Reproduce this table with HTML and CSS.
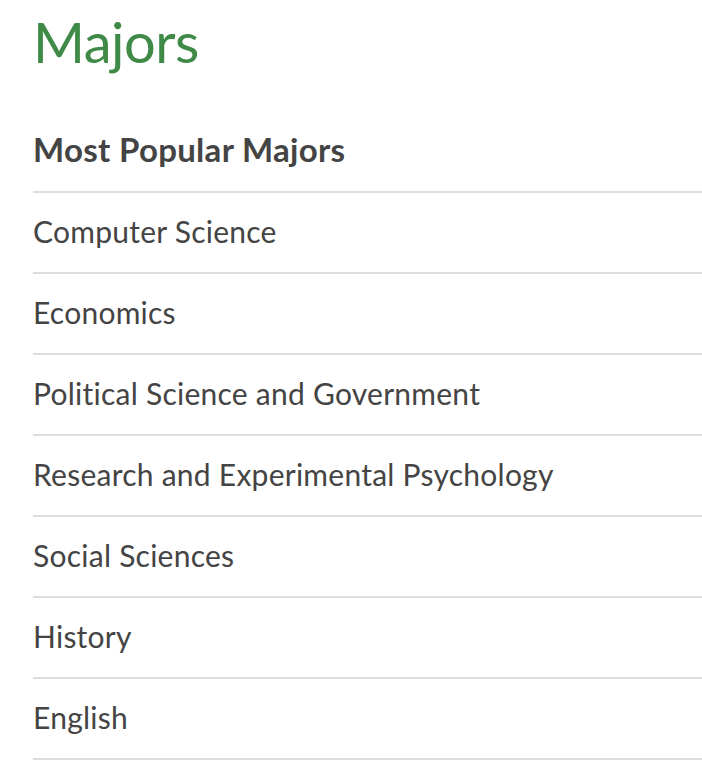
FILE: index.html
```html
<!DOCTYPE html>
<html lang="en">
<head>
<meta charset="utf-8">
<title>Majors</title>
<link rel="stylesheet" href="styles.css">
</head>
<body>
<section class="majors">
  <h1 class="title">Majors</h1>
  <h2 class="subtitle">Most Popular Majors</h2>
  <ul class="list">
    <li class="item">Computer Science</li>
    <li class="item">Economics</li>
    <li class="item">Political Science and Government</li>
    <li class="item">Research and Experimental Psychology</li>
    <li class="item">Social Sciences</li>
    <li class="item">History</li>
    <li class="item">English</li>
  </ul>
</section>
</body>
</html>
```
FILE: styles.css
```css
html, body {
  margin: 0;
  padding: 0;
  background: #fff;
}
body {
  font-family: Lato, "Liberation Sans", sans-serif;
  color: #444;
}
.majors {
  padding-left: 33px;
}
.title {
  margin: 0;
  height: 83px;
  display: flex;
  align-items: center;
  font-size: 56px;
  font-weight: 400;
  letter-spacing: -0.5px;
  color: #3f8a47;
}
.subtitle {
  margin: 0;
  height: 110px;
  display: flex;
  align-items: center;
  font-size: 33px;
  font-weight: 700;
  letter-spacing: 0.3px;
  color: #444;
  border-bottom: 2px solid #ddd;
  box-sizing: border-box;
  padding-top: 24px;
}
.list {
  list-style: none;
  margin: 0;
  padding: 0;
}
.item {
  height: 81px;
  box-sizing: border-box;
  display: flex;
  align-items: center;
  padding-bottom: 3px;
  font-size: 30px;
  letter-spacing: 0.25px;
  border-bottom: 2px solid #ddd;
}
```
